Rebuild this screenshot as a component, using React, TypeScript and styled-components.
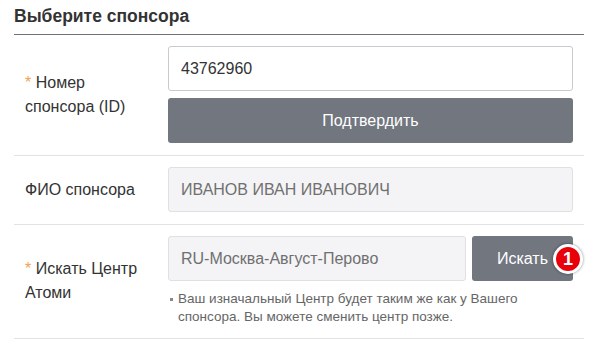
import React from "react";
import styled, { createGlobalStyle } from "styled-components";

const Global = createGlobalStyle`
  html, body { margin: 0; padding: 0; background: #fff; }
  body { font-family: "Liberation Sans", Arial, sans-serif; color: #333; }
  * { box-sizing: border-box; }
`;

const Wrap = styled.div`
  width: 570px;
  margin-left: 14px;
`;

const Title = styled.h2`
  margin: 0;
  height: 35px;
  padding-top: 6px;
  font-size: 17.5px;
  font-weight: bold;
  color: #333;
  border-bottom: 1px solid #6d7179;
  line-height: 21px;
`;

const Row = styled.div`
  display: grid;
  grid-template-columns: 154px 405px;
  align-items: center;
  padding: 11px 0 12px;
  border-bottom: 1px solid #e2e2e2;
`;

const Label = styled.div`
  padding-left: 11px;
  width: 138px;
  font-size: 16px;
  line-height: 24px;
  color: #333;
`;

const LabelLine = styled.span`
  display: block;
  white-space: nowrap;
`;

const Star = styled.span`
  display: inline-block;
  margin-right: 4.5px;
  color: #f5a14b;
`;

const Field = styled.div`
  display: flex;
  flex-direction: column;
  gap: 7px;
`;

const InputLine = styled.div`
  display: flex;
  gap: 6px;
`;

const Input = styled.div<{ $disabled?: boolean; $grow?: boolean }>`
  flex: ${(p) => (p.$grow ? "1 1 auto" : "none")};
  height: 45px;
  display: flex;
  align-items: center;
  padding-left: 12px;
  font-size: 16px;
  border: 1px solid ${(p) => (p.$disabled ? "#e0e0e2" : "#c9cacd")};
  background: ${(p) => (p.$disabled ? "#f4f4f6" : "#fff")};
  color: ${(p) => (p.$disabled ? "#707070" : "#333")};
  border-radius: 3px;
`;

const Button = styled.button<{ $w?: number }>`
  flex: none;
  ${(p) => (p.$w ? `width: ${p.$w}px;` : "width: 100%;")}
  height: 45px;
  border: none;
  border-radius: 3px;
  background: #71767f;
  color: #fff;
  font-family: "Liberation Sans", Arial, sans-serif;
  font-size: 16px;
  padding: 0;
  position: relative;
`;

const Badge = styled.span`
  position: absolute;
  left: 81px;
  top: 8px;
  width: 30px;
  height: 30px;
  border-radius: 50%;
  background: #e8000b;
  border: 3px solid #fff;
  box-shadow: 0 0 3px rgba(0, 0, 0, 0.45);
  color: #fff;
  font-weight: bold;
  font-size: 18px;
  line-height: 24px;
  text-align: center;
`;

const Help = styled.div`
  position: relative;
  margin-top: 2px;
  padding-left: 10px;
  font-size: 13.5px;
  line-height: 18px;
  color: #666;
  &::before {
    content: "";
    position: absolute;
    left: 2px;
    top: 8px;
    width: 3px;
    height: 3px;
    background: #888;
  }
`;

export default function App() {
  return (
    <>
      <Global />
      <Wrap>
        <Title>Выберите спонсора</Title>
        <Row>
          <Label>
            <LabelLine>
              <Star>*</Star>Номер
            </LabelLine>
            <LabelLine>спонсора (ID)</LabelLine>
          </Label>
          <Field>
            <Input>43762960</Input>
            <Button>Подтвердить</Button>
          </Field>
        </Row>
        <Row>
          <Label>ФИО спонсора</Label>
          <Field>
            <Input $disabled>ИВАНОВ ИВАН ИВАНОВИЧ</Input>
          </Field>
        </Row>
        <Row>
          <Label>
            <LabelLine>
              <Star>*</Star>Искать Центр
            </LabelLine>
            <LabelLine>Атоми</LabelLine>
          </Label>
          <Field>
            <InputLine>
              <Input $disabled $grow>RU-Москва-Август-Перово</Input>
              <Button $w={101}>
                Искать
                <Badge>1</Badge>
              </Button>
            </InputLine>
            <Help>
              Ваш изначальный Центр будет таким же как у Вашего спонсора. Вы можете сменить центр позже.
            </Help>
          </Field>
        </Row>
      </Wrap>
    </>
  );
}
